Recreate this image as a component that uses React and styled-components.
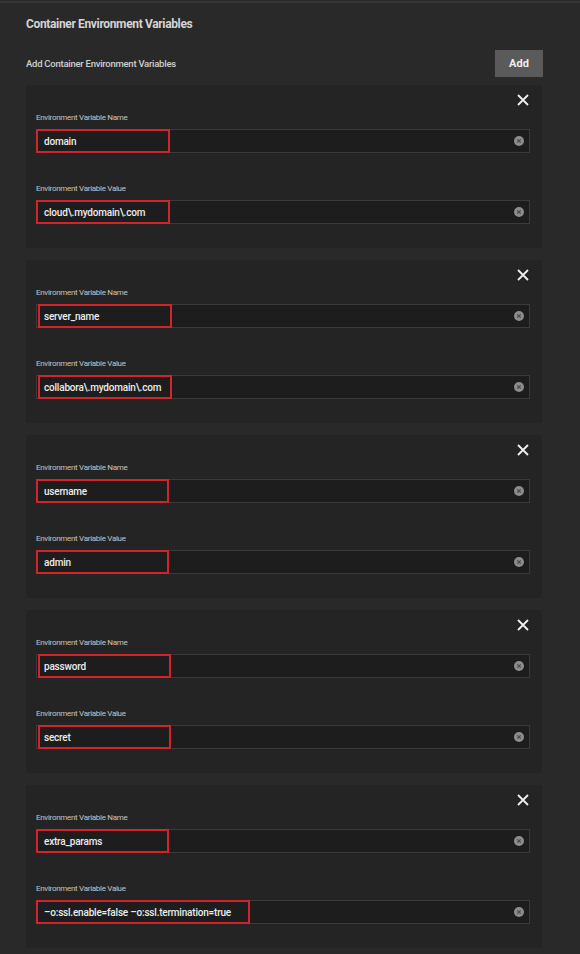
import React from 'react';
import styled, { createGlobalStyle } from 'styled-components';

const GlobalStyle = createGlobalStyle`
  body {
    margin: 0;
    background-color: #292929;
    font-family: Roboto, "Liberation Sans", sans-serif;
  }
`;

const variables = [
  { name: 'domain', value: 'cloud\\.mydomain\\.com', nameMark: [0, 134], valueMark: [0, 134] },
  { name: 'server_name', value: 'collabora\\.mydomain\\.com', nameMark: [2, 134], valueMark: [2, 134] },
  { name: 'username', value: 'admin', nameMark: [0, 133], valueMark: [0, 133] },
  { name: 'password', value: 'secret', nameMark: [2, 133], valueMark: [2, 133] },
  { name: 'extra_params', value: '–o:ssl.enable=false –o:ssl.termination=true', nameMark: [0, 133], valueMark: [0, 214] },
];

const ClearIcon = () => (
  <svg width="10" height="10" viewBox="0 0 10 10">
    <circle cx="5" cy="5" r="5" fill="#8c8c8c" />
    <path d="M3.3 3.3 L6.7 6.7 M6.7 3.3 L3.3 6.7" stroke="#4a4a4a" strokeWidth="1.2" />
  </svg>
);

const CloseIcon = () => (
  <svg width="12" height="12" viewBox="0 0 12 12">
    <path d="M1 1 L11 11 M11 1 L1 11" stroke="#f0f0f0" strokeWidth="1.8" />
  </svg>
);

const InputField = ({ label, value, mark }) => (
  <Field>
    <Label>{label}</Label>
    <InputBox>
      <InputText>{value}</InputText>
      <ClearButton>
        <ClearIcon />
      </ClearButton>
      <Mark $left={mark[0]} $width={mark[1]} />
    </InputBox>
  </Field>
);

const App = () => {
  return (
    <>
      <GlobalStyle />
      <Panel>
        <Title>Container Environment Variables</Title>
        <HeaderRow>
          <SubTitle>Add Container Environment Variables</SubTitle>
          <AddButton>Add</AddButton>
        </HeaderRow>
        <CardList>
          {variables.map((v) => (
            <Card key={v.name}>
              <CloseRow>
                <CloseButton>
                  <CloseIcon />
                </CloseButton>
              </CloseRow>
              <InputField label="Environment Variable Name" value={v.name} mark={v.nameMark} />
              <InputField label="Environment Variable Value" value={v.value} mark={v.valueMark} />
            </Card>
          ))}
        </CardList>
      </Panel>
    </>
  );
};

export default App;

const Panel = styled.div`
  margin-top: 1px;
  border-top: 2px solid #363636;
  padding: 13px 0 6px 26px;
  min-height: 940px;
  box-sizing: border-box;
`;

const Title = styled.div`
  font-size: 12px;
  line-height: 16px;
  font-weight: 700;
  color: #d4d4d4;
  letter-spacing: -0.35px;
`;

const HeaderRow = styled.div`
  width: 517px;
  height: 27px;
  margin: 18px 0 8px;
  display: flex;
  align-items: center;
  justify-content: space-between;
`;

const SubTitle = styled.div`
  font-size: 9.5px;
  font-weight: 500;
  color: #d0d0d0;
  letter-spacing: -0.25px;
`;

const AddButton = styled.button`
  width: 48px;
  height: 27px;
  border: none;
  background-color: #5a5a5a;
  color: #eeeeee;
  font-family: Roboto, "Liberation Sans", sans-serif;
  font-size: 11px;
  font-weight: 700;
  padding: 0;
`;

const CardList = styled.div`
  display: flex;
  flex-direction: column;
  gap: 12px;
`;

const Card = styled.div`
  width: 516px;
  box-sizing: border-box;
  background-color: #242424;
  padding: 8px 12px 24px 10px;
  display: flex;
  flex-direction: column;
  gap: 29px;
`;

const CloseRow = styled.div`
  height: 14px;
  margin-bottom: -25px;
  display: flex;
  justify-content: flex-end;
  align-items: center;
`;

const CloseButton = styled.div`
  width: 12px;
  height: 12px;
  margin-right: 1px;
  display: flex;
`;

const Field = styled.div`
  display: flex;
  flex-direction: column;
  gap: 5px;
`;

const Label = styled.div`
  font-size: 8px;
  line-height: 12px;
  padding-top: 1px;
  color: #c4c4c4;
  letter-spacing: -0.3px;
`;

const InputBox = styled.div`
  position: relative;
  height: 24px;
  box-sizing: border-box;
  border: 1px solid #3a3a3a;
  background-color: #1d1d1d;
  display: flex;
  align-items: center;
  padding: 0 5px 0 7px;
`;

const InputText = styled.span`
  flex: 1;
  font-size: 10px;
  font-weight: 500;
  color: #ececec;
  letter-spacing: -0.2px;
  white-space: nowrap;
`;

const ClearButton = styled.div`
  width: 10px;
  height: 10px;
  display: flex;
`;

const Mark = styled.div`
  position: absolute;
  top: -1px;
  left: ${(p) => p.$left - 1}px;
  width: ${(p) => p.$width}px;
  height: 24px;
  box-sizing: border-box;
  border: 2.5px solid #d3232b;
  pointer-events: none;
`;
